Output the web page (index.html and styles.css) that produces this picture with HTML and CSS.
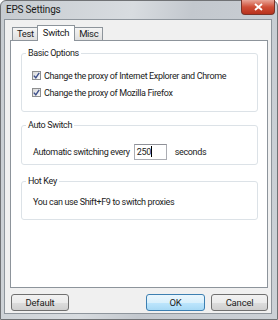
FILE: index.html
```html
<!DOCTYPE html>
<html lang="en">
<head>
    <meta charset="UTF-8">
    <title>EPS Settings</title>
    <link rel="stylesheet" href="styles.css">
</head>
<body>

<div class="window">
    <div class="titlebar">
        <span class="title">EPS Settings</span>
        <div class="close-btn">
            <svg width="9" height="8" viewBox="0 0 9 8"><path d="M1 1 L8 7 M8 1 L1 7" stroke="#fff" stroke-width="1.8"/></svg>
        </div>
    </div>

    <div class="client">
        <div class="tabs">
            <div class="tab">Test</div>
            <div class="tab active">Switch</div>
            <div class="tab">Misc</div>
        </div>

        <div class="panel">
            <div class="group basic">
                <span class="group-title">Basic Options</span>
                <div class="check-row"><span class="checkbox"><svg width="7" height="7" viewBox="0 0 7 7"><path d="M0.8 3.6 L2.8 5.8 L6.2 0.8" fill="none" stroke="#3d4f8a" stroke-width="1.4"/></svg></span>Change the proxy of Internet Explorer and Chrome</div>
                <div class="check-row"><span class="checkbox"><svg width="7" height="7" viewBox="0 0 7 7"><path d="M0.8 3.6 L2.8 5.8 L6.2 0.8" fill="none" stroke="#3d4f8a" stroke-width="1.4"/></svg></span>Change the proxy of Mozilla Firefox</div>
            </div>

            <div class="group auto">
                <span class="group-title">Auto Switch</span>
                <div class="switch-row">
                    <span class="switch-label">Automatic switching every</span>
                    <span class="textbox">250<span class="caret"></span></span>
                    <span>seconds</span>
                </div>
            </div>

            <div class="group hotkey">
                <span class="group-title">Hot Key</span>
                <div class="text-row">You can use Shift+F9 to switch proxies</div>
            </div>
        </div>

        <div class="buttons">
            <button class="btn default">Default</button>
            <div class="spacer"></div>
            <button class="btn ok">OK</button>
            <button class="btn cancel">Cancel</button>
        </div>
    </div>
</div>

</body>
</html>
```

FILE: styles.css
```css
body {
    margin: 0;
    font-family: Roboto, "Open Sans", sans-serif;
    font-size: 9px;
    letter-spacing: -0.35px;
    color: #222;
    background: #fff;
}
.window {
    width: 278px;
    height: 320px;
    box-sizing: border-box;
    border: 1px solid #707275;
    border-radius: 6px 6px 0 0;
    background: linear-gradient(100deg, #c6cbd0 0%, #d8dce0 40%, #c3c8ce 58%, #ccd1d6 100%);
    padding: 0 5px 5px 3px;
    display: flex;
    flex-direction: column;
}
.titlebar {
    height: 18px;
    display: flex;
    align-items: flex-start;
    position: relative;
}
.title {
    margin-top: 3px;
    margin-left: 2px;
    font-size: 10px;
    letter-spacing: -0.2px;
    color: #1a1a1a;
}
.close-btn {
    position: absolute;
    right: -3px;
    top: -1px;
    width: 32px;
    height: 14px;
    border: 1px solid #7a3328;
    border-top: none;
    border-radius: 0 0 4px 4px;
    background: linear-gradient(#e9a597, #cf4e37 50%, #b8321d);
    display: flex;
    align-items: center;
    justify-content: center;
}
.client {
    flex: 1;
    background: #f0f0f0;
    border: 1px solid #8e959c;
    padding: 5px 3px 2px 5px;
    display: flex;
    flex-direction: column;
}
.tabs {
    display: flex;
    align-items: flex-end;
    height: 15px;
    padding-left: 2px;
    position: relative;
    z-index: 1;
}
.tab {
    height: 12px;
    padding: 0 4px;
    border: 1px solid #8d949b;
    border-bottom: none;
    background: linear-gradient(#f4f4f4, #dfdfdf);
    margin-right: -1px;
    line-height: 12px;
    font-size: 9.5px;
}
.tab.active {
    height: 15px;
    padding: 0 5px;
    background: #fff;
    margin-left: -1px;
    margin-bottom: -1px;
    line-height: 13px;
    position: relative;
}
.panel {
    flex: 1;
    background: #fff;
    border: 1px solid #8d949b;
    padding: 0 9px 0 10px;
    display: flex;
    flex-direction: column;
}
.group {
    position: relative;
    box-sizing: border-box;
    border: 1px solid #dce2e7;
    border-radius: 3px;
    padding-left: 10px;
}
.group-title {
    position: absolute;
    top: -7px;
    left: 4px;
    padding: 0 2px;
    background: #fff;
    font-size: 9px;
    line-height: 12px;
}
.basic {
    margin-top: 12px;
    height: 59px;
    padding-top: 13px;
}
.auto {
    margin-top: 13px;
    height: 40px;
    padding-top: 16px;
}
.hotkey {
    margin-top: 16px;
    height: 39px;
    padding-top: 10px;
}
.check-row {
    display: flex;
    align-items: center;
    height: 17px;
}
.checkbox {
    width: 9px;
    height: 9px;
    box-sizing: border-box;
    border: 1px solid #8e8f8f;
    background: linear-gradient(135deg, #d8d8d8, #fbfbfb);
    margin-right: 3px;
    display: flex;
    align-items: center;
    justify-content: center;
}
.switch-row {
    display: flex;
    align-items: center;
    height: 19px;
    padding-left: 1px;
}
.textbox {
    width: 29px;
    height: 14px;
    border: 1px solid #abadb3;
    border-top-color: #8e9097;
    margin: 0 8px 0 4px;
    padding-left: 2px;
    display: flex;
    align-items: center;
}
.caret {
    width: 1px;
    height: 11px;
    background: #000;
}
.text-row {
    height: 20px;
    line-height: 20px;
    padding-left: 1px;
}
.buttons {
    display: flex;
    height: 17px;
    margin-top: 6px;
    padding-left: 1px;
}
.spacer {
    flex: 1;
}
.btn {
    width: 58px;
    height: 17px;
    padding: 0;
    font-family: Roboto, "Open Sans", sans-serif;
    font-size: 9.5px;
    letter-spacing: -0.2px;
    color: #222;
    border: 1px solid #707070;
    border-radius: 3px;
    background: linear-gradient(#f2f2f2 0%, #ebebeb 50%, #dddddd 51%, #cfcfcf 100%);
}
.btn.ok {
    width: 59px;
    margin-right: 6px;
    border-color: #3c7fb1;
    background: linear-gradient(#eaf6fd 0%, #d9f0fc 50%, #bee6fd 51%, #a7d9f5 100%);
}
.btn.cancel {
    width: 57px;
}
```
